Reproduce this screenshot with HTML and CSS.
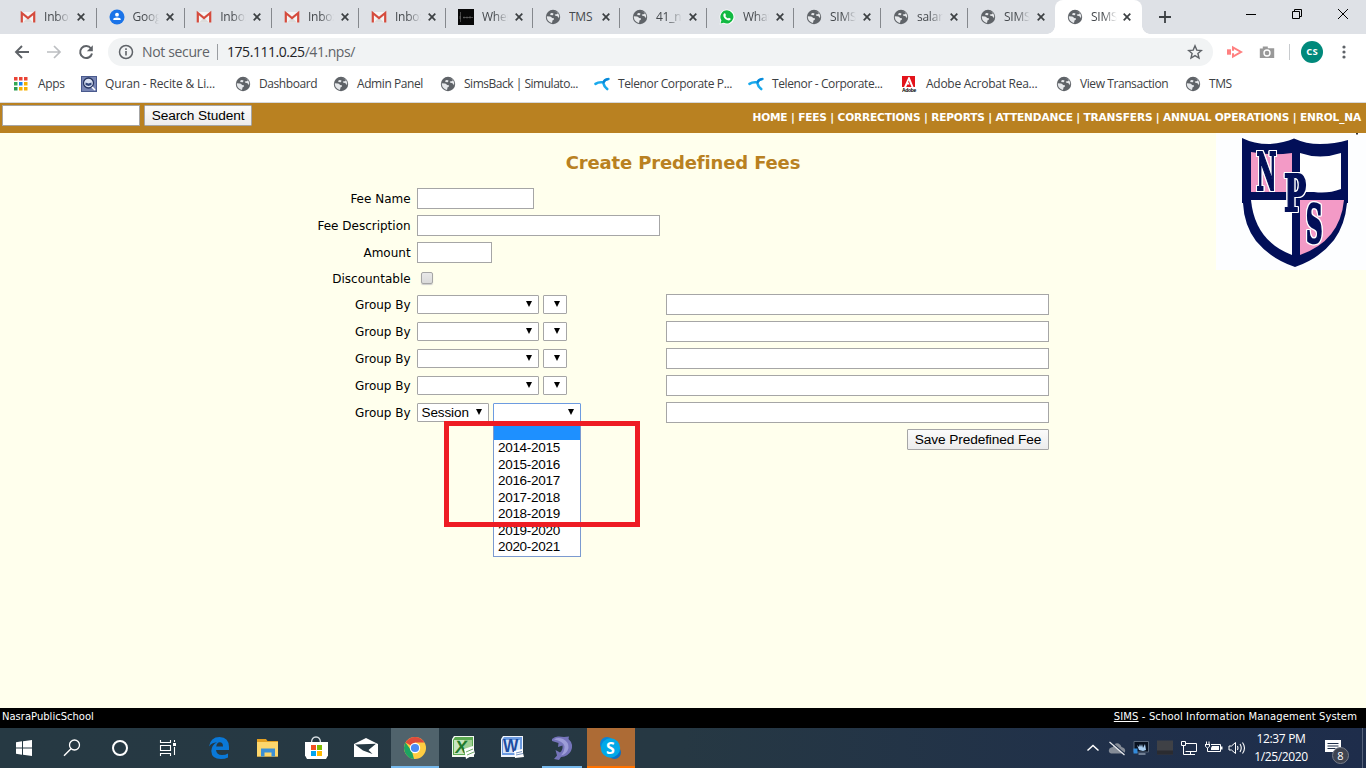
FILE: index.html
```html
<!DOCTYPE html>
<html lang="en">
<head>
<meta charset="utf-8">
<title>SIMS</title>
<link rel="stylesheet" href="styles.css">
</head>
<body>
<svg class="defs" width="0" height="0">
  <symbol id="globe" viewBox="0 0 16 16"><circle cx="8" cy="8" r="7.2" fill="#5f6368"/><path d="M1.800 7.300 5 7.600Q6.500 7.800 7 9L8.800 9.300Q9.400 10 8.500 11L7.600 11.300 7 13.900Q2.600 13 1.800 8.500ZM8.800 2 Q11.500 2.200 13 4.600L11.500 5.200 9.800 5.400 10 6.600 12.400 7.200Q13.400 8 14 9.300 14.800 5.500 12.200 3.200ZM5.600 4.300Q7.600 3.700 8.600 4.700L7.800 6.300 5.200 6Z" fill="#e6e8eb"/></symbol>
  <symbol id="gmail" viewBox="0 0 16 16"><path d="M1.500 3h13v10.500h-13z" fill="#f4f4f4"/><path d="M3 13.500 8 8.500 13 13.500Z" fill="#dcdcdc"/><path d="M1.800 13.500V4L8 9l6.200-5v9.500" fill="none" stroke="#d54b3d" stroke-width="2.200"/></symbol>
  <symbol id="contact" viewBox="0 0 16 16"><circle cx="8" cy="8" r="7.500" fill="#1a73e8"/><circle cx="8" cy="5.700" r="1.900" fill="#fff"/><path d="M4.300 11V10q0-1.600 3.700-1.600t3.700 1.600v1Z" fill="#fff"/></symbol>
  <symbol id="dark" viewBox="0 0 16 16"><path d="M0 0h16v16H0z" fill="#080808"/><path d="M2.500 3v10M2 7v3M5 8.500h10M6 7.500v2M9 7.500v2M12 7v2.500" stroke="#777" stroke-width=".6"/></symbol>
  <symbol id="whatsapp" viewBox="0 0 16 16"><path d="M8 .5a7.500 7.500 0 1 1-3.500 14.100L.5 15.500 1.500 11.700A7.500 7.500 0 0 1 8 .5" fill="#fff"/><path d="M8 1.300a6.600 6.600 0 1 1-3.300 12.400L1.500 14.500 2.400 11.400A6.600 6.600 0 0 1 8 1.300" fill="#12b942"/><path d="M5.200 4.300 6.300 4.400 7 6.200 6.300 7.100Q7.200 8.800 9 9.600L9.900 8.700 11.800 9.700Q11.600 11.500 9.800 11.500 6 11 4.400 7.200 4 5.300 5.200 4.300Z" fill="#fff"/></symbol>
  <symbol id="close" viewBox="0 0 8 8"><path d="M.7.700 7.300 7.300M7.300.700.7 7.300" stroke="#3c4043" stroke-width="1.700"/></symbol>
  <symbol id="telenor" viewBox="0 0 16 16"><path d="M1.500 7.800Q4.500 5.800 8.800 6.300M9.500 6.500Q10.500 3.300 14.500 3M9.300 7Q10 10.500 13.200 13" fill="none" stroke="#19a9ec" stroke-width="2.600" stroke-linecap="round"/><path d="M9.500 6.500Q10.500 3.500 14 3" fill="none" stroke="#0a84d6" stroke-width="1.800" stroke-linecap="round"/></symbol>
</svg>

<header class="tabs">
  <div class="tab"><svg class="fav"><use href="#gmail"/></svg><span class="name">Inbox</span><svg class="x"><use href="#close"/></svg></div>
  <div class="tab wide"><svg class="fav"><use href="#contact"/></svg><span class="name">Goog</span><svg class="x"><use href="#close"/></svg></div>
  <div class="tab wide"><svg class="fav"><use href="#gmail"/></svg><span class="name">Inbox</span><svg class="x"><use href="#close"/></svg></div>
  <div class="tab"><svg class="fav"><use href="#gmail"/></svg><span class="name">Inbox</span><svg class="x"><use href="#close"/></svg></div>
  <div class="tab"><svg class="fav"><use href="#gmail"/></svg><span class="name">Inbox</span><svg class="x"><use href="#close"/></svg></div>
  <div class="tab"><svg class="fav"><use href="#dark"/></svg><span class="name">When</span><svg class="x"><use href="#close"/></svg></div>
  <div class="tab"><svg class="fav"><use href="#globe"/></svg><span class="name plain">TMS</span><svg class="x"><use href="#close"/></svg></div>
  <div class="tab"><svg class="fav"><use href="#globe"/></svg><span class="name">41_np</span><svg class="x"><use href="#close"/></svg></div>
  <div class="tab"><svg class="fav"><use href="#whatsapp"/></svg><span class="name">What</span><svg class="x"><use href="#close"/></svg></div>
  <div class="tab"><svg class="fav"><use href="#globe"/></svg><span class="name">SIMS</span><svg class="x"><use href="#close"/></svg></div>
  <div class="tab"><svg class="fav"><use href="#globe"/></svg><span class="name">salary</span><svg class="x"><use href="#close"/></svg></div>
  <div class="tab last"><svg class="fav"><use href="#globe"/></svg><span class="name">SIMS</span><svg class="x"><use href="#close"/></svg></div>
  <div class="tab active"><svg class="fav"><use href="#globe"/></svg><span class="name">SIMS</span><svg class="x"><use href="#close"/></svg></div>
  <svg class="plus" viewBox="0 0 12 12"><path d="M6 0v12M0 6h12" stroke="#3c4043" stroke-width="1.800"/></svg>
  <div class="winbtns">
    <svg width="46" height="30"><path d="M18 14.500h10" stroke="#000"/></svg>
    <svg width="46" height="30"><path d="M18.500 11.500h7v7h-7zM20.500 11.500v-2h7v7h-2" fill="none" stroke="#000"/></svg>
    <svg width="46" height="30"><path d="M18 9l10 10M28 9l-10 10" stroke="#000"/></svg>
  </div>
</header>

<div class="toolbar">
  <svg class="nav" viewBox="0 0 16 16"><path d="M15 8H2.500M8 2 2 8l6 6" fill="none" stroke="#5f6368" stroke-width="1.900"/></svg>
  <svg class="nav" viewBox="0 0 16 16"><path d="M1 8h12.500M8 2l6 6-6 6" fill="none" stroke="#bcbec1" stroke-width="1.700"/></svg>
  <svg class="nav" viewBox="0 0 16 16"><path d="M13 4.500A6 6 0 1 0 14 9.500" fill="none" stroke="#5f6368" stroke-width="2"/><path d="M14.800 1.200v6h-6z" fill="#5f6368"/></svg>
  <div class="omni">
    <svg class="info" viewBox="0 0 16 16"><circle cx="8" cy="8" r="6.500" fill="none" stroke="#5f6368" stroke-width="1.500"/><path d="M8 7v4.500M8 4.300v1.600" stroke="#5f6368" stroke-width="1.600"/></svg>
    <span class="notsec">Not secure</span><span class="bar"></span><span class="url">175.111.0.25<i>/41.nps/</i></span>
    <svg class="star" viewBox="0 0 16 16"><path d="M8 1.800 9.800 6.100 14.400 6.500 10.900 9.500 12 14 8 11.600 4 14 5.100 9.500 1.600 6.500 6.200 6.100Z" fill="none" stroke="#5f6368" stroke-width="1.400"/></svg>
  </div>
  <svg class="ext" viewBox="0 0 16 16"><path d="M0 5.300h4v5.400H0z" fill="#ff8080"/><path d="M6 6.800V3.500L14 8 6 12.500V9.200" fill="none" stroke="#ff8080" stroke-width="2"/></svg>
  <svg class="cam" viewBox="0 0 16 16"><path d="M.8 4.500h3V2.500h5v1.800h6.400v9.700H.8z" fill="#999"/><circle cx="8" cy="9" r="3" fill="none" stroke="#fff" stroke-width="1.400"/></svg>
  <span class="vsep"></span><span class="avatar">CS</span>
  <svg class="dots" viewBox="0 0 4 16"><circle cx="2" cy="3" r="1.600"/><circle cx="2" cy="8" r="1.600"/><circle cx="2" cy="13" r="1.600"/></svg>
</div>

<nav class="bookmarks">
  <a class="b-apps"><svg viewBox="0 0 14 14"><path d="M0 0h3.500v3.500H0zM5 0h3.500v3.500H5zM10 0h3.500v3.500h-3.500z" fill="#ea4335"/><path d="M0 5h3.500v3.500H0z" fill="#34a853"/><path d="M5 5h3.500v3.500H5z" fill="#1a86f0"/><path d="M10 5h3.500v3.500h-3.500zM5 10h3.500v3.500H5zM10 10h3.500v3.500h-3.500z" fill="#f6b000"/><path d="M0 10h3.500v3.500H0z" fill="#2a9a50"/></svg><span>Apps</span></a>
  <a class="b-quran"><svg viewBox="0 0 16 16"><path d="M0 0h16v16H0z" fill="#4a5a8e"/><path d="M1 1h14v14H1z" fill="#7886b4"/><circle cx="7.500" cy="7" r="5" fill="#d9e1f2" stroke="#26345f" stroke-width="1.300"/><path d="m4.500 6.500 3 1 3-1v2.500l-3 1-3-1z" fill="#31467a"/><path d="m11 11 3 3" stroke="#fff" stroke-width="1.600"/></svg><span>Quran - Recite &amp; Li...</span></a>
  <a class="b-dash"><svg><use href="#globe"/></svg><span>Dashboard</span></a>
  <a class="b-admin"><svg><use href="#globe"/></svg><span>Admin Panel</span></a>
  <a class="b-sims"><svg><use href="#globe"/></svg><span>SimsBack | Simulato...</span></a>
  <a class="b-tel"><svg><use href="#telenor"/></svg><span>Telenor Corporate P...</span></a>
  <a class="b-tel2"><svg><use href="#telenor"/></svg><span>Telenor - Corporate...</span></a>
  <a class="b-adobe"><svg viewBox="0 0 16 16"><path d="M0 0h13v11H0z" fill="#e3131b"/><path d="M6.500 1 2 11H4.200L5.300 8.500H7.500L6.800 6.500H6L6.700 4.500 9.500 11H11.500L7.500 1Z" fill="#fff"/><text x="0" y="15.500" font-size="5" font-weight="bold" font-family="Liberation Sans, sans-serif" textLength="14">Adobe</text></svg><span>Adobe Acrobat Rea...</span></a>
  <a class="b-view"><svg><use href="#globe"/></svg><span>View Transaction</span></a>
  <a class="b-tms"><svg><use href="#globe"/></svg><span>TMS</span></a>
</nav>

<div class="sitebar">
  <input class="field search" aria-label="Search"><button class="btn sbtn">Search Student</button>
  <div class="menu">HOME | FEES | CORRECTIONS | REPORTS | ATTENDANCE | TRANSFERS | ANNUAL OPERATIONS | ENROL_NA</div>
</div>

<main class="page">
  <h1><span>Create Predefined Fees</span></h1>
  <form class="form">
    <div class="row"><label>Fee Name</label><div class="left"><input class="field w117"></div></div>
    <div class="row"><label>Fee Description</label><div class="left"><input class="field w243"></div></div>
    <div class="row"><label>Amount</label><div class="left"><input class="field w75"></div></div>
    <div class="row short"><label>Discountable</label><div class="left"><span class="check"></span></div></div>
    <div class="row"><label>Group By</label><div class="left"><span class="sel w122"></span><span class="sel w24"></span></div><input class="field w383"></div>
    <div class="row"><label>Group By</label><div class="left"><span class="sel w122"></span><span class="sel w24"></span></div><input class="field w383"></div>
    <div class="row"><label>Group By</label><div class="left"><span class="sel w122"></span><span class="sel w24"></span></div><input class="field w383"></div>
    <div class="row"><label>Group By</label><div class="left"><span class="sel w122"></span><span class="sel w24"></span></div><input class="field w383"></div>
    <div class="row"><label>Group By</label><div class="left"><span class="sel w72">Session</span><div class="sel w88 open"><ul class="options"><li class="on"></li><li>2014-2015</li><li>2015-2016</li><li>2016-2017</li><li>2017-2018</li><li>2018-2019</li><li>2019-2020</li><li>2020-2021</li></ul></div></div><input class="field w383"></div>
    <div class="row end"><button class="btn save" type="button">Save Predefined Fee</button></div>
  </form>
  <div class="mark"></div>
  <svg class="crest" viewBox="0 0 150 137">
    <path d="M0 0h150v137H0z" fill="#fdfeff"/><path d="M140 0h2v1.500h-2z" fill="#333"/>
    <path d="M26 5Q38 11 53 11 68 10 78 5.500 90 11 104 11 119 11 132 7V70H131Q129 92 118 107 103 126 79 134 55 126 40 108 28 92 27 70H26Z" fill="#020f58"/>
    <path d="M35 19Q55 23 76 20V59H35Z" fill="#f39ac6"/>
    <path d="M84 20Q104 27 125 20V56Q112 61 98 59H84Z" fill="#fff"/>
    <path d="M35 67H76V122Q39 108 35 67Z" fill="#fff"/>
    <path d="M84 67H128Q124 108 84 122Z" fill="#f39ac6"/>
    <g class="initials" font-family="DejaVu Serif, serif" font-weight="bold" fill="#020f58" stroke="#020f58">
      <text transform="translate(40.500 57) scale(.42 1)" font-size="52" stroke-width="2">N</text>
      <text transform="translate(68 78) scale(.58 1)" font-size="51" stroke-width="2">P</text>
      <text transform="translate(90 109) scale(.44 1)" font-size="52" stroke-width="2.600">S</text>
    </g>
  </svg>
</main>

<footer class="foot"><span class="fl">NasraPublicSchool</span><span class="fr"><u>SIMS</u> - School Information Management System</span></footer>

<div class="taskbar">
  <div class="sys">
    <svg viewBox="0 0 48 40"><path d="M16 14.200 22 13.300V19.500H16zM23 13.200 32 12V19.500H23zM16 20.500H22V26.700L16 25.800zM23 20.500H32V28L23 26.800z" fill="#fff"/></svg>
    <svg viewBox="0 0 48 40"><circle cx="26.500" cy="17" r="5" fill="none" stroke="#fff" stroke-width="1.300"/><path d="m23 20.800-7 7" stroke="#fff" stroke-width="1.500"/></svg>
    <svg viewBox="0 0 48 40"><circle cx="24" cy="20" r="7" fill="none" stroke="#fff" stroke-width="2"/></svg>
    <svg viewBox="0 0 48 40"><path d="M16.500 12v2.500h10V12M16.500 28v-2.500h10V28M16.500 17.500h10v5h-10zM30.500 12v2M30.500 19v8" fill="none" stroke="#fff" stroke-width="1.100"/><path d="M29 15h3v3h-3z" fill="#fff"/></svg>
  </div>
  <div class="apps">
    <div><svg viewBox="0 0 48 40"><path d="M14 18.500Q15.500 9 24.500 9 34 9.500 34 19V22H21Q21.500 27 27 27 30.500 27 33 25.500V29.500Q30 31 26 31 16.500 31 16.300 23 16.500 17 22 14.200 16.500 14.500 14 18.500ZM21.200 18.500H28Q28 14.300 24.700 14.300 21.700 14.500 21.200 18.500Z" fill="#0a78d7"/></svg></div>
    <div><svg viewBox="0 0 48 40"><path d="M13 11h9l1.500 2H34v15.500H13z" fill="#e4a021"/><path d="M13 14h21v14.500H13z" fill="#fdd66c"/><path d="M17 28.500V20.500h14v8h-3.500v-4h-7v4z" fill="#3b8fd6"/></svg></div>
    <div><svg viewBox="0 0 48 40"><path d="M18.500 15q0-6 4.500-6t4.500 6" fill="none" stroke="#d6dde2" stroke-width="1.300"/><path d="M12 14h23v13.500L33 31H14l-2-3.500z" fill="#fff"/><path d="M18 17h5v5h-5z" fill="#f35022"/><path d="M24 17h5v5h-5z" fill="#7fbb00"/><path d="M18 23h5v5h-5z" fill="#00a4ef"/><path d="M24 23h5v5h-5z" fill="#ffb901"/></svg></div>
    <div><svg viewBox="0 0 48 40"><path d="M12 16 24 10l12 6V29H12z" fill="#fff"/><path d="M13 16.500 34 15.800 26.500 22 30.500 26 21 22.500z" fill="#263943"/></svg></div>
    <div class="chrome"><svg viewBox="0 0 48 40"><circle cx="24" cy="20" r="11" fill="#ffcd42"/><path d="M24 20 14.500 14.500A11 11 0 0 1 33.500 14.500H24Z" fill="#de4b3c"/><path d="M14.500 14.500 21 23.500 23 31A11 11 0 0 1 14.500 14.500Z" fill="#1da462"/><circle cx="24" cy="20" r="5.200" fill="#fff"/><circle cx="24" cy="20" r="4.100" fill="#4c8bf5"/></svg></div>
    <div><svg viewBox="0 0 48 40"><path d="M14 8h20v21H12V11z" fill="#f2f8f0"/><path d="M15 9h18v18H13V12z" fill="#5ba951"/><path d="M14 12h10v14H14z" fill="#c9e5c1"/><path d="M24 12h8v12h-8z" fill="#9fd093"/><text transform="translate(14.500 24.500) skewX(-8)" font-size="18" font-weight="bold" font-family="Liberation Sans, sans-serif" fill="#1f7a2d">X</text><path d="m24 21 9-3 2 8-9 5z" fill="#fff"/><path d="m26 24 7-3M27 27l7-3" stroke="#6baa65"/></svg></div>
    <div><svg viewBox="0 0 48 40"><path d="M14 8h20v21H12V11z" fill="#f0f5fc"/><path d="M15 9h18v18H13V12z" fill="#6d9be0"/><path d="M14 12h17v13H14z" fill="#d6e4f7"/><text transform="translate(14 24) scale(.9 1)" font-size="18" font-weight="bold" font-family="Liberation Sans, sans-serif" fill="#1c4da1">W</text><path d="m25 23 8-2 2 8-9 1z" fill="#fff"/><path d="m27 25 6-1.500M27 27l7-1.500" stroke="#7694c2"/></svg></div>
    <div class="dolphin"><svg viewBox="0 0 48 40"><path d="M14 11Q17 8 21 8.500L26 9 31 8.500 30.500 11Q36 16 33 23 30 28.500 23 29L21 32 16 31 19 27.500 17.500 22 22 24.500Q25 22 24.500 17.500L20 19 20.500 15 14 13Z" fill="#7574ba"/><path d="M16 11.500Q20 9 25 11 31 14 30.500 20 29 26 23 27.500 27 23 26.500 18 25 13 16 11.500Z" fill="#9d9dd8"/></svg></div>
    <div class="skype"><svg viewBox="0 0 48 40"><circle cx="20" cy="16" r="7" fill="#0b84d4"/><circle cx="27.500" cy="24.500" r="6.500" fill="#0b70c5"/><circle cx="23.500" cy="20" r="9.700" fill="#00a9e8"/><text x="23.500" y="25.500" text-anchor="middle" font-size="16" font-weight="bold" font-family="Open Sans, sans-serif" fill="#fff">S</text></svg></div>
  </div>
  <div class="tray">
    <svg viewBox="0 0 24 24"><path d="m6.500 14.500 5.500-5 5.500 5" fill="none" stroke="#fff" stroke-width="1.500"/></svg>
    <svg viewBox="0 0 24 24"><path d="M6 17.500Q2.500 16 4.500 12.500 6 11 8 11 9.500 6.500 13.500 7.500 16 8.500 16.500 11 21 12 20 16L18.500 17.500Z" fill="#858c97"/><path d="m5.500 5.500 14 12" stroke="#20304a" stroke-width="1.200"/><path d="m4.500 6 15 13" stroke="#e8eaee" stroke-width="1.200"/></svg>
    <svg viewBox="0 0 24 24"><path d="M5 5.500h14.500v10.500H5z" fill="#07101f" stroke="#59677a"/><path d="m8 9 2 2 1-3 1 3 1-3 1 4 2-4 1 6-3 1-4-1z" fill="#a8cdf0"/><path d="M9.500 18h7" stroke="#8b99ab" stroke-width="1.500"/><path d="M4.500 12.500h4v5h-4z" fill="#328bdb"/></svg>
    <svg viewBox="0 0 24 24"><path d="M4 4.500h16v14H4z" fill="#3f4146"/><path d="M4 14.500h16v4H4z" fill="#2a2b30"/></svg>
    <svg viewBox="0 0 24 24"><path d="M8.500 7.500h11v8h-11M4.500 5.500h4v4h-4zM6.500 9.500v9h3.500M9 18.500h9M13.500 15.500v3" fill="none" stroke="#fff"/></svg>
    <svg viewBox="0 0 24 24"><path d="M10 8.500h9.500v7H9M4 8.500h5M5.500 5.500v3M8 5.500v3M4.500 8.500v2q2 3 4 0v-2M6.500 12v3.500h3" fill="none" stroke="#fff"/><path d="M11 10h7v4h-8v-2zM20 10.500h1.500v3H20z" fill="#fff"/></svg>
    <svg viewBox="0 0 24 24"><path d="M4 10h2.500l4-3.500v11l-4-3.500H4z" fill="none" stroke="#fff"/><path d="M12.500 10q1 2 0 4M15 8q2.500 4 0 8M17.500 6.500q4 5.500 0 11" fill="none" stroke="#fff" stroke-width="1.100"/></svg>
  </div>
  <div class="clock"><span class="c1">12:37 PM</span><span class="c2">1/25/2020</span></div>
  <div class="action"><svg viewBox="0 0 17 17"><path d="M0 0h16v12h-4l-4 4v-4H0z" fill="#fff"/><path d="M2.500 3.500h11M2.500 6h11M2.500 8.500h8" stroke="#20304a"/></svg><span class="badge">8</span></div>
</div>
</body>
</html>
```
FILE: styles.css
```css
* { box-sizing: border-box; }
body { margin: 0; width: 1366px; height: 768px; overflow: hidden; display: flex; flex-direction: column; font-family: "Open Sans", sans-serif; background: #ffffed; }
.defs { position: absolute; }
svg { flex: none; display: block; }

/* browser tabs */
.tabs { height: 34px; flex: none; background: #dee1e6; display: flex; align-items: center; padding-left: 10px; }
.tab { width: 87px; height: 34px; flex: none; display: flex; align-items: center; padding-left: 10px; position: relative; }
.tab + .tab { padding-left: 11.500px; }
.tab.wide { width: 87.700px; }
.tab.last { width: 86.600px; }
.tab:not(.active):not(.last)::after { content: ""; position: absolute; right: 0; top: 8px; width: 1px; height: 20px; background: #85888d; }
.fav { width: 16px; height: 16px; }
.name { width: 26px; margin-left: 8px; font-size: 12px; line-height: 18px; letter-spacing: -.2px; color: #45494d; overflow: hidden; white-space: nowrap; -webkit-mask-image: linear-gradient(90deg, #000 12px, transparent 26px); mask-image: linear-gradient(90deg, #000 12px, transparent 26px); }
.name.plain { -webkit-mask-image: none; mask-image: none; }
.x { width: 8px; height: 8px; margin-left: 7px; }
.tab.active { background: #fff; border-radius: 8px 8px 0 0; padding-left: 12px; }
.active .x { margin-left: 6px; }
.active::before { content: ""; position: absolute; left: -8px; bottom: 0; width: 103px; height: 8px; background: radial-gradient(circle at 0 0, transparent 7.500px, #fff 8px) 0 0 / 8px 8px no-repeat, radial-gradient(circle at 100% 0, transparent 7.500px, #fff 8px) 100% 0 / 8px 8px no-repeat; }
.plus { width: 12px; height: 12px; margin-left: 17px; }
.winbtns { display: flex; margin-left: auto; align-self: flex-start; }

/* address row */
.toolbar { height: 36px; flex: none; background: #fff; display: flex; align-items: center; padding-left: 14px; }
.nav { width: 16px; height: 16px; margin-right: 16px; }
.omni { width: 1105px; height: 28px; flex: none; border-radius: 14px; background: #f1f3f4; display: flex; align-items: center; padding: 0 10px; margin-left: -2px; font-size: 14px; line-height: 18px; }
.info { width: 16px; height: 16px; margin-right: 8px; }
.notsec { color: #5f6368; width: 75px; letter-spacing: -.35px; white-space: nowrap; padding-bottom: 1px; }
.bar { width: 1px; height: 16px; background: #9a9da1; }
.url { margin-left: 9px; color: #202124; letter-spacing: -.45px; padding-bottom: 1px; }
.url i { font-style: normal; color: #5f6368; }
.star { width: 16px; height: 16px; margin-left: auto; }
.ext { width: 16px; height: 16px; margin-left: 14px; }
.cam { width: 16px; height: 16px; margin-left: 16px; }
.vsep { width: 1px; height: 16px; background: #c8cbce; margin-left: 14px; }
.avatar { width: 22px; height: 22px; border-radius: 50%; background: #00897b; color: #fff; font: bold 9.500px/22px "Open Sans", sans-serif; text-align: center; margin-left: 11px; }
.dots { width: 4px; height: 16px; margin-left: 19px; fill: #5f6368; }

/* bookmarks */
.bookmarks { height: 33px; flex: none; background: #fff; border-bottom: 1px solid #d5d8dc; display: flex; align-items: center; padding: 0 0 4px 14px; font-size: 12px; line-height: 16px; color: #3c4043; white-space: nowrap; letter-spacing: -.42px; }
.bookmarks a { display: flex; align-items: center; flex: none; }
.bookmarks span { padding-bottom: 1px; }
.bookmarks svg { width: 16px; height: 16px; margin-right: 8px; }
.b-apps { width: 67px; letter-spacing: -.3px; }
.b-apps svg { width: 14px !important; height: 14px !important; margin-right: 10px !important; }
.b-quran { width: 154px; letter-spacing: -.15px; }
.b-dash { width: 98px; }
.b-admin { width: 107px; }
.b-sims { width: 154px; letter-spacing: -.48px; }
.b-tel, .b-tel2 { width: 154px; letter-spacing: -.38px; }
.b-adobe { width: 154px; letter-spacing: -.26px; }
.b-view { width: 129px; }

/* site bar */
.sitebar { height: 30px; flex: none; background: #b98121; display: flex; align-items: flex-start; padding: 2px 5px 0 2px; }
.field { border: 1px solid #a6a6a6; background: #fff; height: 21px; padding: 0; margin: 0; display: block; flex: none; outline: none; }
.search { width: 138px; }
.btn { height: 21px; padding: 0; border: 1px solid #a6a6a6; border-radius: 1px; background: linear-gradient(#fbfbfb, #ececec); font: 13.700px/17px "Liberation Sans", sans-serif; letter-spacing: -.12px; color: #000; white-space: nowrap; }
.sbtn { width: 108px; margin-left: 4px; }
.menu { margin-left: auto; font: bold 10.600px/14px "DejaVu Sans", sans-serif; letter-spacing: -.17px; color: #fff; white-space: nowrap; padding-top: 5px; }

/* content */
.page { flex: 1; position: relative; background: #ffffed; }
h1 { margin: 0; padding-top: 19px; height: 52px; text-align: center; font: bold 18px/22px "DejaVu Sans", sans-serif; letter-spacing: -.15px; color: #b98121; }
.form { width: 732px; margin-left: 317px; }
.row { height: 27px; display: flex; align-items: center; }
.row.short { height: 25px; }
.row.end { justify-content: flex-end; }
.row label { width: 94px; flex: none; font: 12px/16px "DejaVu Sans", sans-serif; color: #000; white-space: nowrap; padding-right: .4px; display: flex; justify-content: flex-end; }
.left { width: 249px; margin-left: 6px; display: flex; gap: 4px; flex: none; align-items: center; }
.w117 { width: 117px; } .w243 { width: 243px; } .w75 { width: 75px; } .w383 { width: 383px; }
.w122 { width: 122px; } .w24 { width: 24px; } .w72 { width: 72px; } .w88 { width: 88px; }
.save { width: 142px; }
.check { width: 12px; height: 12px; margin: 0 0 1px 4px; border: 1px solid #a5a5a5; border-radius: 2px; background: linear-gradient(#e8e8e8, #dadada); box-shadow: 0 1px 1px #ccc; }
.sel { height: 19px; border: 1px solid #a6a6a6; border-radius: 1px; background: #fff; position: relative; font: 13.500px/17px "Liberation Sans", sans-serif; letter-spacing: -.1px; padding-left: 3.500px; flex: none; }
.sel::after { content: ""; position: absolute; right: 6px; top: 5px; border: 3.500px solid transparent; border-top: 6px solid #000; border-bottom: 0; }
.open { border-color: #6d9be0; height: 20px; }
.options { position: absolute; left: -1px; top: 20px; width: 88px; height: 133px; margin: 0; padding: 0; list-style: none; background: #fff; border: 1px solid #7b9ad0; border-top: 0; }
.options li { height: 16.500px; line-height: 16px; padding-left: 4px; font-size: 13.500px; letter-spacing: -.3px; }
.options .on { background: #1e90ff; }
.mark { position: absolute; left: 444px; top: 288px; width: 196px; height: 106px; border: 5px solid #ee1c24; }
.crest { position: absolute; right: 0; top: 0; width: 150px; height: 137px; }
.initials { filter: drop-shadow(1px 0 #fff) drop-shadow(-1px 0 #fff) drop-shadow(0 1px #fff) drop-shadow(0 -1px #fff); }

/* footer */
.foot { height: 20px; flex: none; background: #000; color: #fff; display: flex; justify-content: space-between; padding: 0 9px 0 2px; font: 10px/17px "DejaVu Sans", sans-serif; }
.fr { letter-spacing: .12px; }

/* taskbar */
.taskbar { height: 40px; flex: none; display: flex; background: linear-gradient(90deg, #263943, #263843 50%, #20304a 82%, #1e2d4b); color: #fff; }
.sys { display: flex; width: 195px; flex: none; }
.sys svg, .apps svg { width: 48px; height: 40px; }
.apps { display: flex; gap: 1px; }
.apps > div { width: 48px; height: 40px; flex: none; position: relative; }
.chrome { background: #50636c; box-shadow: inset 0 -2px #76b9ed; }
.dolphin { background: linear-gradient(#76b9ed, #76b9ed) 4px 100% / 40px 2px no-repeat; }
.skype { background: #ad6b35; box-shadow: inset 0 -2px #ff7200; }
.tray { margin-left: auto; display: flex; align-items: center; }
.tray svg { width: 24px; height: 24px; }
.clock { width: 64px; display: flex; flex-direction: column; align-items: center; font-size: 12px; line-height: 18px; padding-top: 2px; white-space: nowrap; letter-spacing: -.35px; }
.action { width: 53px; position: relative; padding: 12px 0 0 12px; }
.action::after { content: ""; position: absolute; right: 3px; top: 0; width: 1px; height: 40px; background: #56627a; }
.action svg { width: 17px; height: 17px; }
.badge { position: absolute; left: 19px; top: 19px; width: 17px; height: 17px; border-radius: 50%; background: #3f4450; border: 1px solid #777d89; font-size: 11px; line-height: 15px; text-align: center; }
```
